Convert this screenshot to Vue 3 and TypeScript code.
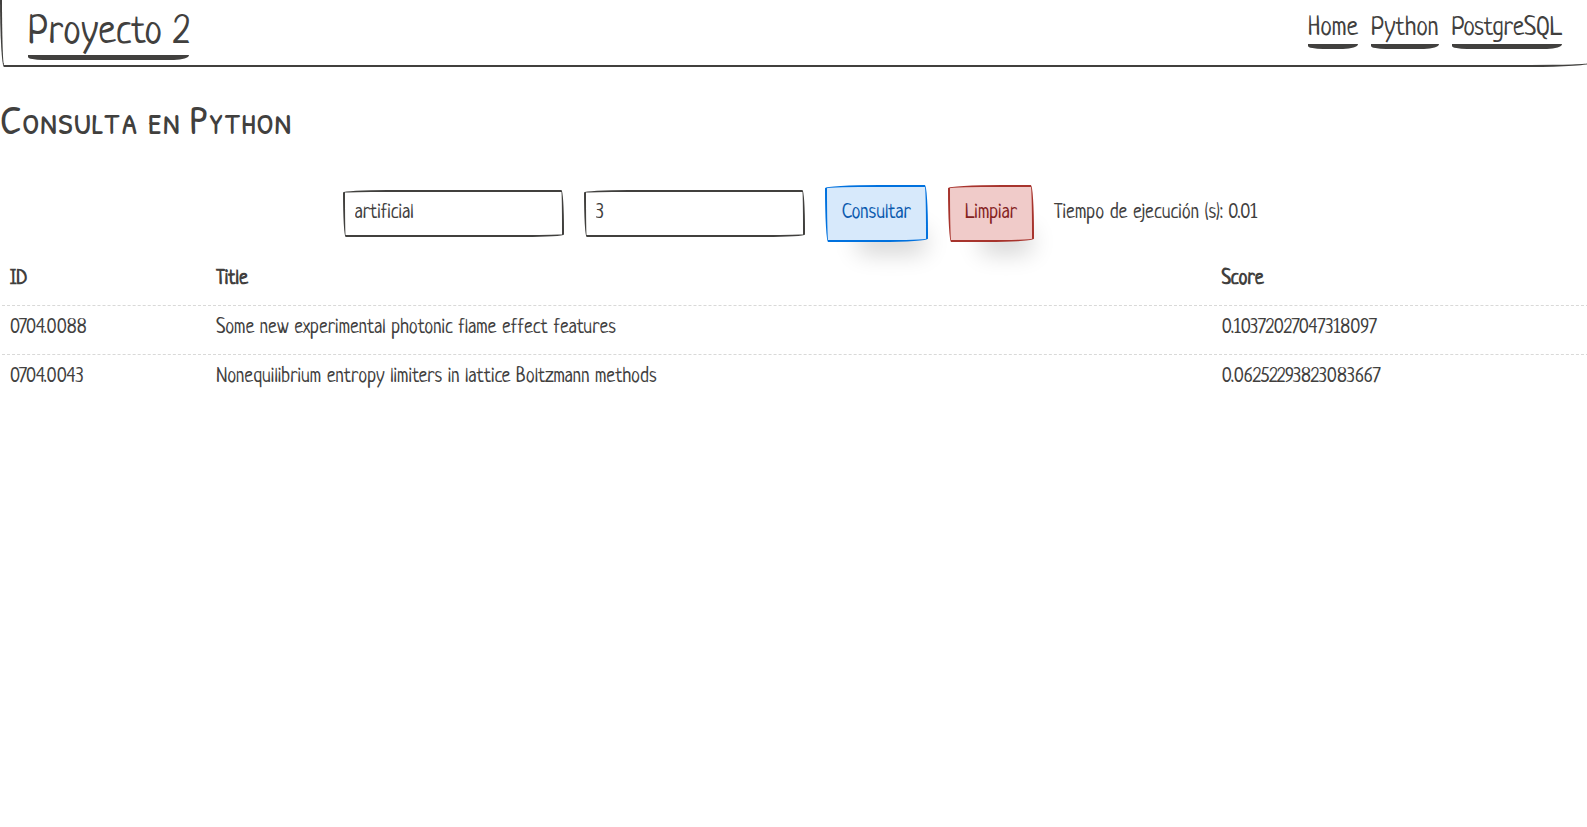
<script setup lang="ts">
import { ref } from 'vue'

interface Result {
  id: string
  title: string
  score: string
}

const query = ref('artificial')
const limit = ref('3')
const elapsed = ref('0.01')
const results = ref<Result[]>([
  { id: '0704.0088', title: 'Some new experimental photonic flame effect features', score: '0.10372027047318097' },
  { id: '0704.0043', title: 'Nonequilibrium entropy limiters in lattice Boltzmann methods', score: '0.06252293823083667' },
])
const links = ['Home', 'Python', 'PostgreSQL']

function clear() {
  query.value = ''
  limit.value = ''
  results.value = []
}
</script>

<template>
  <div class="page">
    <nav class="navbar">
      <a class="brand" href="#">Proyecto 2</a>
      <ul class="links">
        <li v-for="link in links" :key="link"><a href="#">{{ link }}</a></li>
      </ul>
    </nav>
    <main>
      <h2>Consulta en Python</h2>
      <form class="search" @submit.prevent>
        <input v-model="query" type="text" aria-label="Consulta" />
        <input v-model="limit" type="text" aria-label="Cantidad de resultados" />
        <button class="primary" type="submit">Consultar</button>
        <button class="danger" type="button" @click="clear">Limpiar</button>
        <span>Tiempo de ejecución (s): {{ elapsed }}</span>
      </form>
      <table>
        <colgroup>
          <col class="col-id" />
          <col class="col-title" />
          <col class="col-score" />
        </colgroup>
        <thead>
          <tr><th>ID</th><th>Title</th><th>Score</th></tr>
        </thead>
        <tbody>
          <tr v-for="r in results" :key="r.id">
            <td>{{ r.id }}</td>
            <td>{{ r.title }}</td>
            <td>{{ r.score }}</td>
          </tr>
        </tbody>
      </table>
    </main>
  </div>
</template>

<style>
html {
  overflow-x: hidden;
}
body {
  background: #fff;
}
</style>

<style scoped>
.page {
  margin-right: -4px;
  color: #41403e;
  font-family: Neucha, "Liberation Sans Narrow", "Arial Narrow", "Liberation Sans", sans-serif;
  font-size: 20px;
  line-height: 30px;
}
.navbar {
  display: flex;
  justify-content: space-between;
  align-items: flex-start;
  margin-top: -6px;
  padding: 14px 27px 5px 26px;
  border: 2px solid #41403e;
  border-top: 0;
  border-radius: 255px 15px 225px 15px / 15px 225px 15px 255px;
}
a {
  color: inherit;
  text-decoration: none;
  border-bottom: 5px solid #41403e;
  border-radius: 0 0 15px 15px / 0 0 5px 3px;
}
.brand {
  padding-top: 3px;
  font-size: 40px;
  line-height: 44px;
}
.links {
  display: flex;
  gap: 13px;
  margin: 0;
  padding: 6px 0 0;
  list-style: none;
  font-size: 26px;
  line-height: 30px;
}
.links a {
  display: block;
}
h2 {
  margin: 26px 0 40px;
  font-family: "Patrick Hand SC", Lato, sans-serif;
  font-size: 40px;
  font-weight: 400;
  line-height: 52px;
}
.search {
  display: flex;
  justify-content: center;
  align-items: center;
  gap: 20px;
  padding-left: 9px;
}
input,
button {
  box-sizing: border-box;
  color: inherit;
  font: inherit;
  border: 2px solid #41403e;
  border-radius: 255px 15px 225px 15px / 15px 225px 15px 255px;
  outline: none;
}
input {
  width: 221px;
  height: 47px;
  padding: 0 10px;
  background: transparent;
}
button {
  height: 57px;
  padding: 0 15px;
  box-shadow: 15px 28px 25px -18px rgba(0, 0, 0, 0.2);
  cursor: pointer;
}
.primary {
  color: #0b5aae;
  background: #d7e9fb;
  border-color: #0071de;
}
.danger {
  color: #85231f;
  background: #f0cbc9;
  border-color: #a7342d;
}
table {
  width: 100%;
  margin-top: 15px;
  border-spacing: 2px 0;
  table-layout: fixed;
}
.col-id {
  width: 12.9%;
}
.col-score {
  width: 23.7%;
}
th,
td {
  height: 32px;
  padding: 7px 8px 9px;
  text-align: left;
  border-bottom: 1px dashed #d9d9d8;
}
tr:last-child td {
  border-bottom: 0;
}
</style>
